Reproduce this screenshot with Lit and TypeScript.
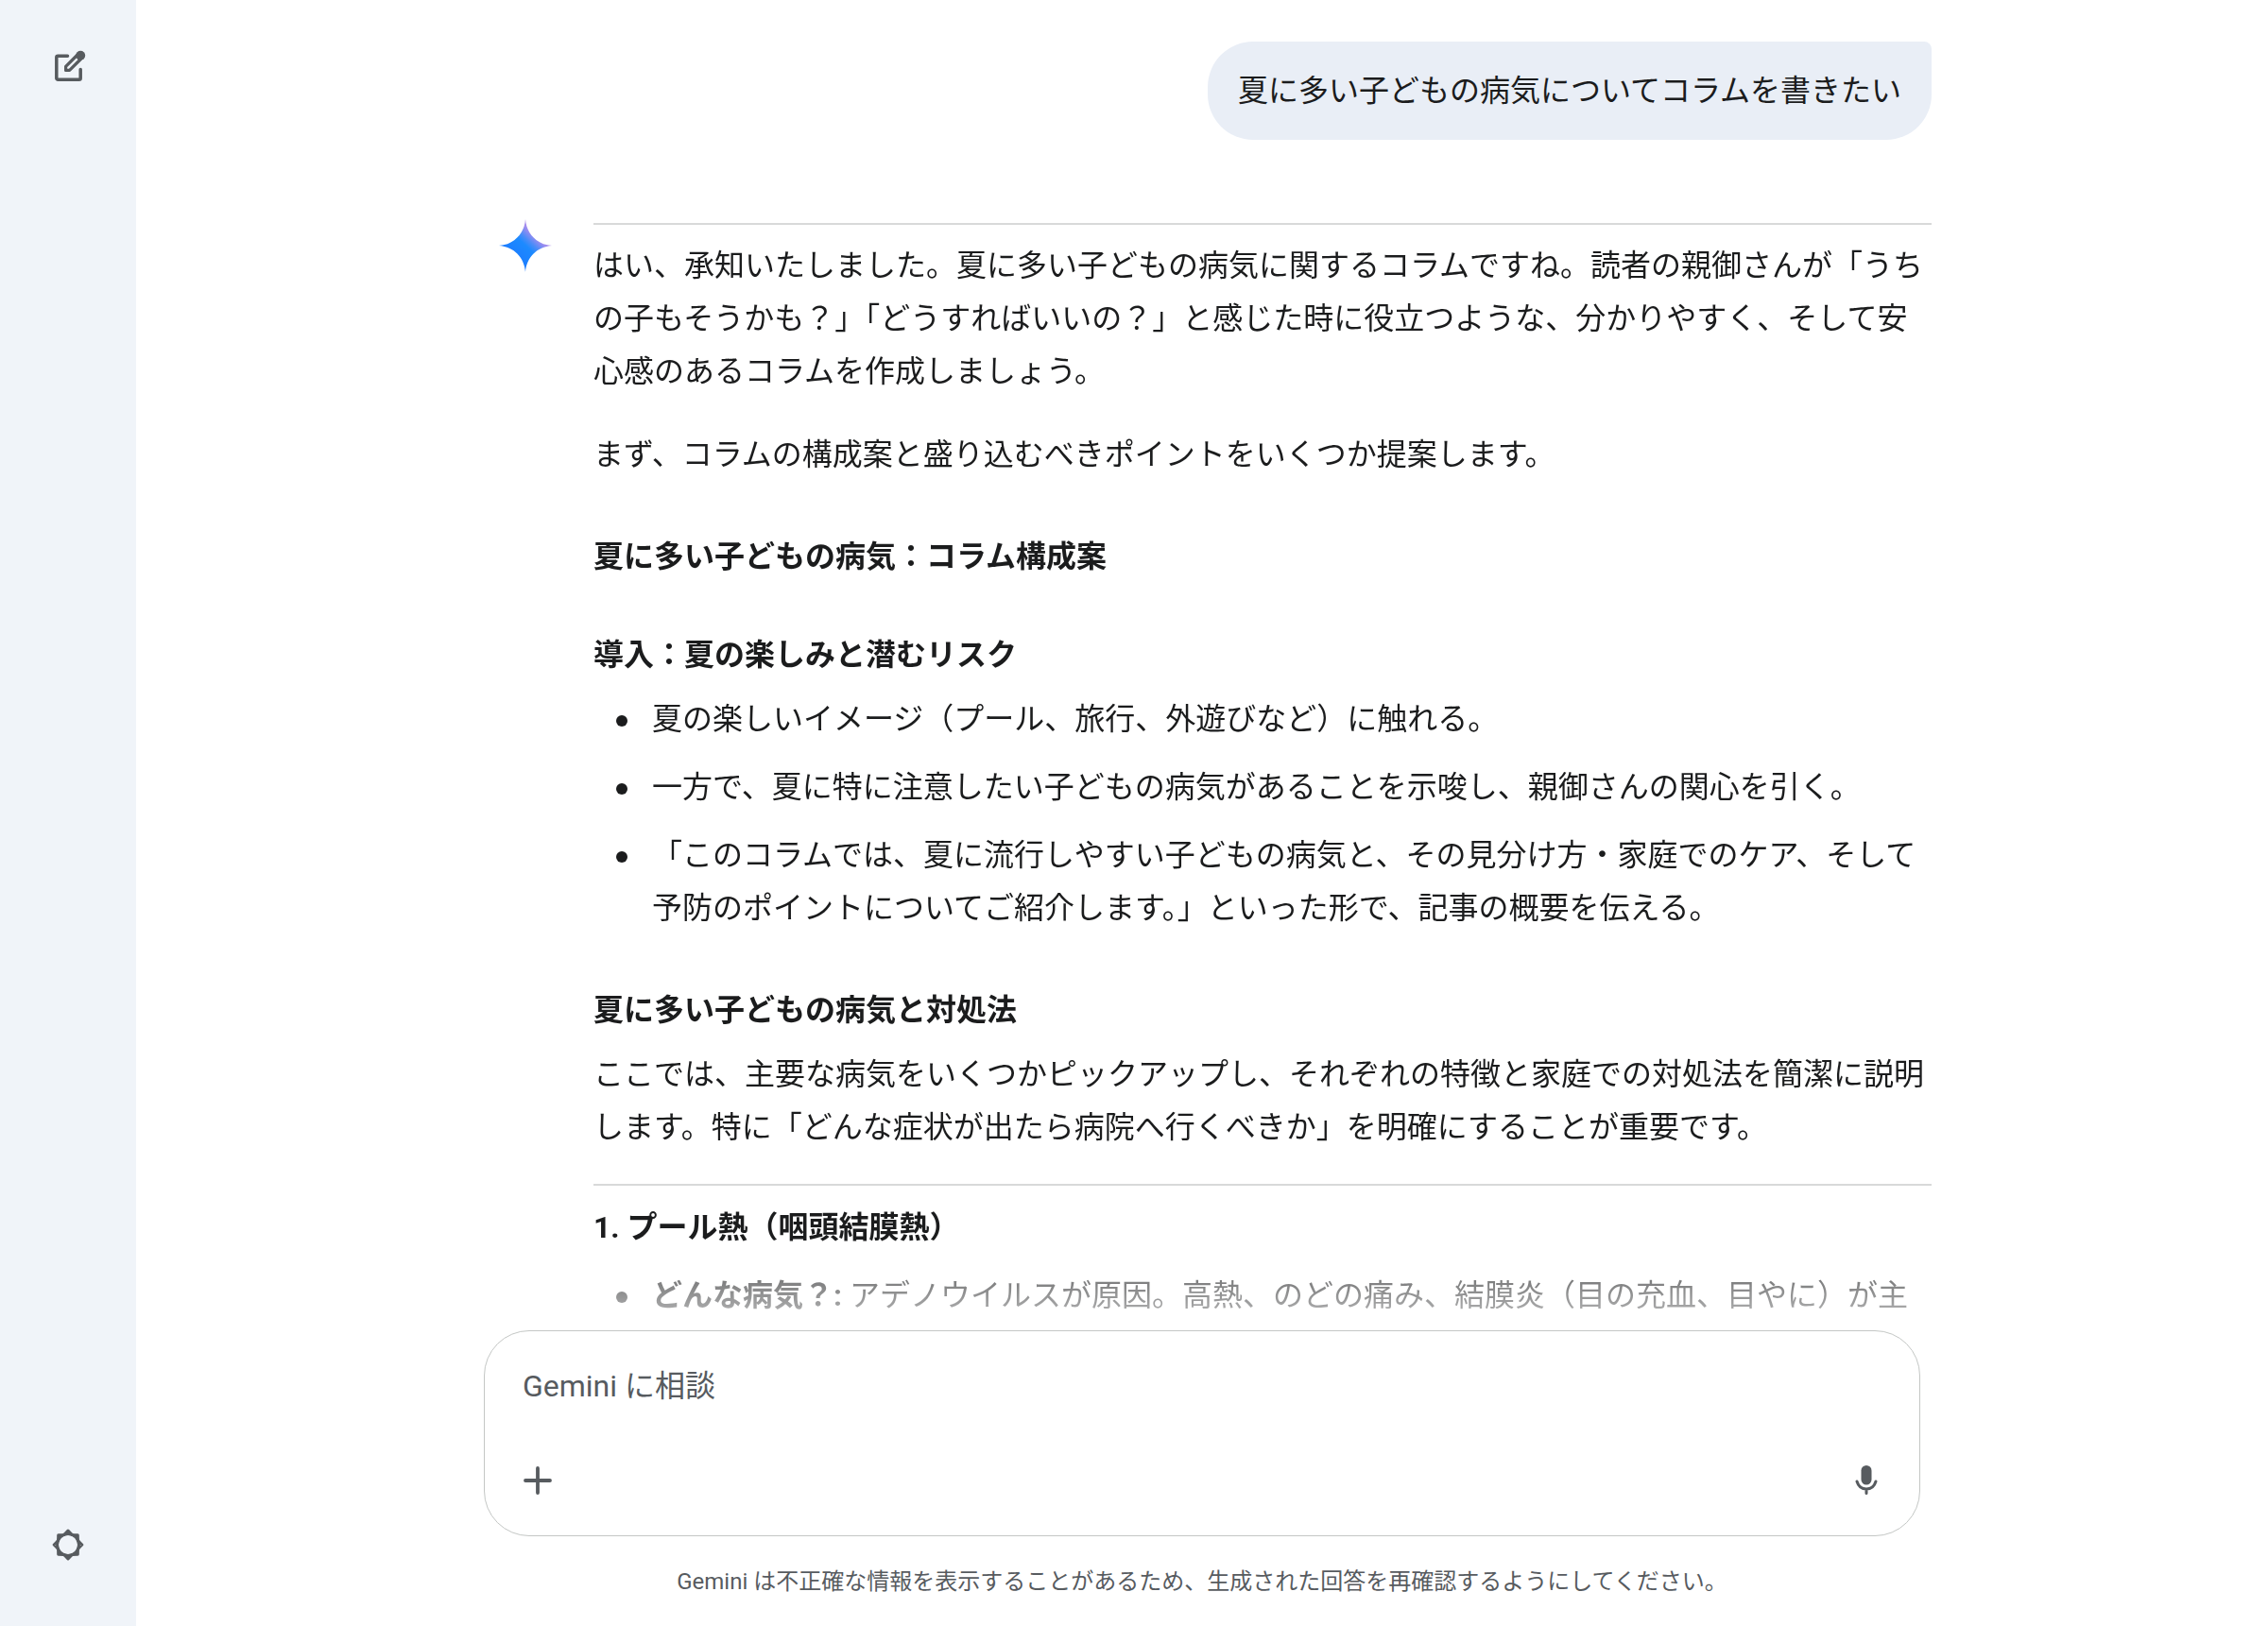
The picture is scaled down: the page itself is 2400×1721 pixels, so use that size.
import { LitElement, html, css } from "lit";
import { customElement } from "lit/decorators.js";

interface Block {
  kind: "p" | "h" | "rule" | "list";
  text?: string;
  items?: { lead?: string; text: string }[];
}

const ANSWER: Block[] = [
  { kind: "rule" },
  {
    kind: "p",
    text: "はい、承知いたしました。夏に多い子どもの病気に関するコラムですね。読者の親御さんが「うちの子もそうかも？」「どうすればいいの？」と感じた時に役立つような、分かりやすく、そして安心感のあるコラムを作成しましょう。",
  },
  { kind: "p", text: "まず、コラムの構成案と盛り込むべきポイントをいくつか提案します。" },
  { kind: "h", text: "夏に多い子どもの病気：コラム構成案" },
  { kind: "h", text: "導入：夏の楽しみと潜むリスク" },
  {
    kind: "list",
    items: [
      { text: "夏の楽しいイメージ（プール、旅行、外遊びなど）に触れる。" },
      { text: "一方で、夏に特に注意したい子どもの病気があることを示唆し、親御さんの関心を引く。" },
      {
        text: "「このコラムでは、夏に流行しやすい子どもの病気と、その見分け方・家庭でのケア、そして予防のポイントについてご紹介します。」といった形で、記事の概要を伝える。",
      },
    ],
  },
  { kind: "h", text: "夏に多い子どもの病気と対処法" },
  {
    kind: "p",
    text: "ここでは、主要な病気をいくつかピックアップし、それぞれの特徴と家庭での対処法を簡潔に説明します。特に「どんな症状が出たら病院へ行くべきか」を明確にすることが重要です。",
  },
  { kind: "rule" },
  { kind: "h", text: "1. プール熱（咽頭結膜熱）" },
  {
    kind: "list",
    items: [
      { lead: "どんな病気？:", text: " アデノウイルスが原因。高熱、のどの痛み、結膜炎（目の充血、目やに）が主" },
    ],
  },
];

@customElement("app-root")
export class AppRoot extends LitElement {
  static styles = css`
    :host {
      display: flex;
      height: 100vh;
      background: #fff;
      color: #1b1c1d;
      font: 32px/56px Roboto, "Noto Sans CJK JP", sans-serif;
    }
    * {
      box-sizing: border-box;
    }
    button {
      display: grid;
      place-items: center;
      width: 48px;
      height: 48px;
      padding: 0;
      border: 0;
      background: none;
      color: #575b5f;
      cursor: pointer;
    }
    svg {
      display: block;
    }
    .rail {
      flex: none;
      display: flex;
      flex-direction: column;
      justify-content: space-between;
      align-items: center;
      width: 144px;
      padding: 46px 0 62px;
      background: #f0f4f9;
    }
    .main {
      flex: 1;
      min-width: 0;
      display: flex;
      flex-direction: column;
    }
    .scroller {
      flex: 1;
      min-height: 0;
      overflow: hidden;
      padding: 44px 24px 0 48px;
      mask-image: linear-gradient(to top, rgb(0 0 0 / 24%), rgb(0 0 0 / 58%) 54px, #000 88px);
    }
    .thread {
      max-width: 1520px;
      margin: 0 auto;
    }
    .prompt {
      width: fit-content;
      margin: 0 0 84px auto;
      padding: 24px 32px;
      border-radius: 48px 8px 48px 48px;
      background: #e9eef6;
    }
    .reply {
      display: flex;
      align-items: flex-start;
    }
    .avatar {
      flex: none;
      width: 104px;
      padding: 0 0 0 4px;
    }
    .answer {
      flex: 1;
      min-width: 0;
      padding-top: 4px;
    }
    .rule {
      height: 2px;
      margin: 0;
      border: 0;
      background: #d8d9d9;
    }
    p {
      margin: 0;
    }
    .rule + p {
      margin-top: 15px;
    }
    p + p {
      margin-top: 32px;
    }
    h3 {
      margin: 56px 0 0;
      font-size: 32px;
      line-height: 48px;
      font-weight: 700;
    }
    h3 + p,
    h3 + ul {
      margin-top: 16px;
    }
    p + .rule {
      margin-top: 32px;
    }
    .rule + h3 {
      margin-top: 20px;
    }
    .rule + h3 + ul {
      margin-top: 20px;
    }
    ul {
      display: grid;
      gap: 16px;
      margin: 0;
      padding: 0 0 0 24px;
      list-style: none;
    }
    li {
      display: flex;
      gap: 26px;
    }
    li::before {
      content: "";
      flex: none;
      width: 12px;
      height: 12px;
      margin-top: 24px;
      border-radius: 50%;
      background: currentColor;
    }
    .dock {
      flex: none;
      padding: 0 48px 27px;
    }
    .composer {
      display: flex;
      flex-direction: column;
      justify-content: space-between;
      max-width: 1520px;
      min-height: 218px;
      margin: 0 auto;
      padding: 34px 32px;
      border: 1px solid #c4c7c5;
      border-radius: 48px;
      background: #fff;
    }
    .field {
      width: 100%;
      height: 48px;
      padding: 0 8px;
      border: 0;
      outline: 0;
      background: none;
      color: #1b1c1d;
      font: inherit;
      line-height: 48px;
    }
    .field::placeholder {
      color: #575b5f;
      opacity: 1;
    }
    .tools {
      display: flex;
      justify-content: space-between;
    }
    .notice {
      margin-top: 28px;
      color: #575b5f;
      font-size: 24px;
      line-height: 40px;
      text-align: center;
    }
  `;

  private block(b: Block) {
    switch (b.kind) {
      case "rule":
        return html`<hr class="rule" />`;
      case "h":
        return html`<h3>${b.text}</h3>`;
      case "p":
        return html`<p>${b.text}</p>`;
      case "list":
        return html`<ul>
          ${b.items!.map(
            (i) => html`<li><span>${i.lead ? html`<b>${i.lead}</b>` : ""}${i.text}</span></li>`
          )}
        </ul>`;
    }
  }

  render() {
    return html`
      <nav class="rail" aria-label="メニュー">
        <button type="button" aria-label="チャットを新規作成">
          <svg width="40" height="40" viewBox="-4 -2 40 40" fill="none" stroke="currentColor" stroke-width="3.5" stroke-linecap="round" stroke-linejoin="round">
            <path d="M15.5 7.300H5.300A1.500 1.500 0 0 0 3.800 8.800V30.700A1.500 1.500 0 0 0 5.300 32.200H27.700A1.500 1.500 0 0 0 29.200 30.700V21.500" />
            <path d="M13.600 22.400V18.400L25.500 6.500L29.500 10.500L17.600 22.400Z" stroke-width="3.2" />
            <circle cx="29.200" cy="6.700" r="5" fill="currentColor" stroke="none" />
          </svg>
        </button>
        <button type="button" aria-label="設定とヘルプ">
          <svg width="36" height="36" viewBox="-18 -18 36 36" fill="none" stroke="currentColor" stroke-width="3" stroke-linejoin="round">
            <path d="M0-14.900L4.300-10.400L10.300-10.300L10.400-4.300L14.900 0L10.400 4.300L10.300 10.300L4.300 10.400L0 14.900L-4.300 10.400L-10.300 10.300L-10.400 4.300L-14.900 0L-10.400-4.300L-10.300-10.300L-4.300-10.400Z" />
            <circle r="11.500" />
          </svg>
        </button>
      </nav>
      <main class="main">
        <div class="scroller">
          <div class="thread">
            <div class="prompt">夏に多い子どもの病気についてコラムを書きたい</div>
            <div class="reply">
              <div class="avatar">
                <svg width="56" height="56" viewBox="0 0 56 56" aria-hidden="true">
                  <defs>
                    <linearGradient id="spark" x1="16" y1="40" x2="42" y2="12" gradientUnits="userSpaceOnUse">
                      <stop offset="0" stop-color="#1c7dff" />
                      <stop offset=".45" stop-color="#1c8aff" />
                      <stop offset=".6" stop-color="#4a8cf8" />
                      <stop offset=".8" stop-color="#9a8df0" />
                      <stop offset="1" stop-color="#b68be8" />
                    </linearGradient>
                  </defs>
                  <path d="M28 0C29 15 40 27 56 28C40 29 29 41 28 56C27 41 16 29 0 28C16 27 27 15 28 0Z" fill="url(#spark)" />
                </svg>
              </div>
              <div class="answer">${ANSWER.map((b) => this.block(b))}</div>
            </div>
          </div>
        </div>
        <div class="dock">
          <div class="composer">
            <input class="field" type="text" aria-label="プロンプトを入力" placeholder="Gemini に相談" />
            <div class="tools">
              <button type="button" aria-label="ファイルを追加">
                <svg width="32" height="32" viewBox="0 0 32 32" fill="none" stroke="currentColor" stroke-width="3.8" stroke-linecap="round">
                  <path d="M16 3v26M3 16h26" />
                </svg>
              </button>
              <button type="button" aria-label="マイク">
                <svg width="32" height="36" viewBox="0 0 32 36" fill="none" stroke="currentColor" stroke-width="3" stroke-linecap="round">
                  <rect x="10.500" y="2" width="11" height="20.500" rx="5.500" fill="currentColor" stroke="none" />
                  <path d="M6 19C7.500 24 11 27 16 27S24.500 24 26 19M16 27v4.500" />
                </svg>
              </button>
            </div>
          </div>
          <p class="notice">Gemini は不正確な情報を表示することがあるため、生成された回答を再確認するようにしてください。</p>
        </div>
      </main>
    `;
  }
}
